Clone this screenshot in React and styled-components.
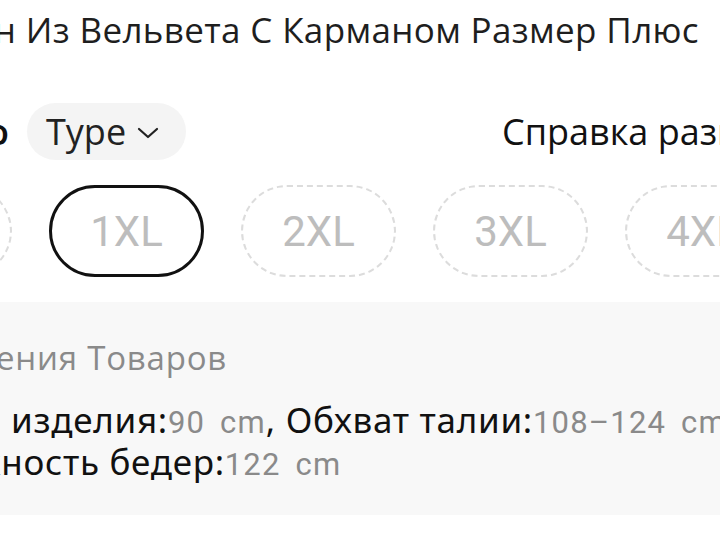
import React from 'react';
import styled, { createGlobalStyle } from 'styled-components';

const GlobalStyle = createGlobalStyle`
  html, body {
    margin: 0;
    padding: 0;
    background: #ffffff;
  }
  body {
    width: 720px;
    height: 551px;
    overflow: hidden;
  }
`;

const sizes = ['XL', '1XL', '2XL', '3XL', '4XL'];

const App = () => {
    const selected = '1XL';

    return (
        <Page>
            <GlobalStyle />
            <Title>
                <span>Женские Брюки Штан Из Вельвета С Карманом Размер Плюс</span>
            </Title>

            <FilterRow>
                {/* подпись слева уходит за край, видна только последняя буква */}
                <LabelClip>
                    <Label>Фото</Label>
                </LabelClip>
                <TypePill>
                    Type
                    <svg width="22" height="12" viewBox="0 0 22 12" fill="none" stroke="#222" strokeWidth="2.2" strokeLinecap="round" strokeLinejoin="round">
                        <polyline points="2 2 11 10 20 2" />
                    </svg>
                </TypePill>
                <Spacer />
                <GuideClip>
                    <GuideLink>Справка размеров</GuideLink>
                </GuideClip>
            </FilterRow>

            <SizeRow>
                {sizes.map((size) => (
                    <SizeChip key={size} $active={size === selected}>{size}</SizeChip>
                ))}
            </SizeRow>

            <InfoPanel>
                <InfoTitle>Измерения Товаров</InfoTitle>
                <InfoText>
                    Длина изделия:<Value>90 cm</Value>, Обхват талии:<Value>108–124 cm</Value>
                    <br />
                    Окружность бедер:<Value>122 cm</Value>
                </InfoText>
            </InfoPanel>
        </Page>
    );
};

export default App;


const Page = styled.div`
    width: 720px;
    height: 551px;
    overflow: hidden;
    background: #ffffff;
`;

const Title = styled.div`
    display: flex;
    justify-content: flex-end;
    padding: 8px 21px 0 0;
    height: 44px;
    font-family: "Open Sans", sans-serif;
    font-size: 35px;
    letter-spacing: 0.35px;
    line-height: 44px;
    color: #1e1e1e;
    white-space: nowrap;
`;

const FilterRow = styled.div`
    display: flex;
    align-items: center;
    margin-top: 51px;
    height: 57px;
    white-space: nowrap;
`;

const LabelClip = styled.div`
    flex: none;
    display: flex;
    justify-content: flex-end;
    width: 9px;
    margin-right: 18px;
    overflow: hidden;
`;

const Label = styled.span`
    font-family: "Open Sans", sans-serif;
    font-size: 36px;
    font-weight: 600;
    color: #111;
`;

const TypePill = styled.div`
    flex: none;
    display: flex;
    align-items: center;
    gap: 11px;
    box-sizing: border-box;
    width: 159px;
    height: 57px;
    padding: 0 0 0 19px;
    border-radius: 29px;
    background: #f4f4f4;
    font-family: "Open Sans", sans-serif;
    font-size: 36px;
    color: #222;

    svg {
        margin-top: 2px;
    }
`;

const Spacer = styled.div`
    flex: 1;
`;

const GuideClip = styled.div`
    flex: none;
    width: 218px;
    overflow: hidden;
`;

const GuideLink = styled.span`
    font-family: "Open Sans", sans-serif;
    font-size: 36px;
    font-weight: 500;
    color: #111;
`;

const SizeRow = styled.div`
    display: flex;
    gap: 37px;
    margin-top: 25px;
    margin-left: -143px;
`;

const SizeChip = styled.div`
    flex: none;
    display: flex;
    align-items: center;
    justify-content: center;
    box-sizing: border-box;
    width: 155px;
    height: 92px;
    border-radius: 46px;
    border: ${(p) => (p.$active ? '3px solid #111' : '2px dashed #dcdcdc')};
    font-family: Roboto, sans-serif;
    font-size: 42px;
    color: #bdbdbd;
`;

const InfoPanel = styled.div`
    margin-top: 25px;
    height: 213px;
    box-sizing: border-box;
    padding-top: 36px;
    margin-left: -112px;
    background: #f8f8f8;
    white-space: nowrap;
`;

const InfoTitle = styled.div`
    font-family: "Open Sans", sans-serif;
    font-size: 33px;
    letter-spacing: 0.8px;
    line-height: 40px;
    color: #8a8a8a;
`;

const InfoText = styled.div`
    margin-top: 22px;
    font-family: "Noto Sans", sans-serif;
    font-size: 35px;
    letter-spacing: 0.7px;
    line-height: 39px;
    color: #111;
`;

const Value = styled.span`
    font-family: Roboto, sans-serif;
    font-size: 31px;
    font-weight: 400;
    letter-spacing: 1.2px;
    word-spacing: 6px;
    color: #8a8a8a;
`;
